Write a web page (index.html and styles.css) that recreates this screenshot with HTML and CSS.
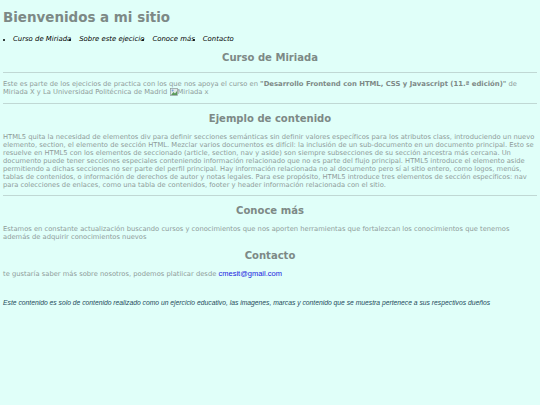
FILE: index.html
```html
<!DOCTYPE html>
<html lang="es">
<head>
<meta charset="utf-8">
<title>Bienvenidos a mi sitio</title>
<link rel="stylesheet" href="styles.css">
</head>
<body>
<header class="top">
<h1>Bienvenidos a mi sitio</h1>
<nav>
<ul class="menu">
<li><a>Curso de Miriada</a></li>
<li><a>Sobre este ejecicio</a></li>
<li><a>Conoce más</a></li>
<li><a>Contacto</a></li>
</ul>
</nav>
</header>
<section class="block intro">
<h2>Curso de Miriada</h2>
<hr>
<p>Este es parte de los ejecicios de practica con los que nos apoya el curso en <strong>"Desarrollo Frontend con HTML, CSS y Javascript (11.ª edición)"</strong> de Miriada X y La Universidad Politécnica de Madrid <span class="broken"><svg class="broken-icon" viewBox="0 0 8 8" width="8" height="8"><rect x="0.5" y="0.5" width="7" height="7" fill="#dfe8e8" stroke="#8a9a9a" stroke-width="0.7"/><path d="M1 7l2.5-3 1.5 1.5L7 3v4z" fill="#5a9a5a"/><circle cx="2.6" cy="2.6" r="1" fill="#7aa0d8"/></svg>Miriada x</span></p>
<hr>
</section>
<section class="block sample">
<h2>Ejemplo de contenido</h2>
<p>HTML5 quita la necesidad de elementos div para definir secciones semánticas sin definir valores específicos para los atributos class, introduciendo un nuevo elemento, section, el elemento de sección HTML. Mezclar varios documentos es difícil: la inclusión de un sub-documento en un documento principal. Esto se resuelve en HTML5 con los elementos de seccionado (article, section, nav y aside) son siempre subsecciones de su sección ancestra más cercana. Un documento puede tener secciones especiales conteniendo información relacionado que no es parte del flujo principal. HTML5 introduce el elemento aside permitiendo a dichas secciones no ser parte del perfil principal. Hay información relacionada no al documento pero sí al sitio entero, como logos, menús, tablas de contenidos, o información de derechos de autor y notas legales. Para ese propósito, HTML5 introduce tres elementos de sección específicos: nav para colecciones de enlaces, como una tabla de contenidos, footer y header información relacionada con el sitio.</p>
<hr>
</section>
<section class="block more">
<h2>Conoce más</h2>
<p>Estamos en constante actualización buscando cursos y conocimientos que nos aporten herramientas que fortalezcan los conocimientos que tenemos además de adquirir conocimientos nuevos</p>
</section>
<section class="block contact">
<h2>Contacto</h2>
<p>te gustaría saber más sobre nosotros, podemos platiicar desde <a class="mail">cmesit@gmail.com</a></p>
</section>
<footer class="foot">Este contenido es solo de contenido realizado como un ejercicio educativo, las imagenes, marcas y contenido que se muestra pertenece a sus respectivos dueños</footer>
</body>
</html>
```

FILE: styles.css
```css
html, body {
  margin: 0;
  padding: 0;
}
body {
  background: #e0fff9;
  color: #8f9c9a;
  font-family: "DejaVu Sans", Verdana, sans-serif;
  font-size: 6.75px;
  line-height: 8px;
  padding: 0 3px;
  height: 405px;
  box-sizing: border-box;
  overflow: hidden;
}
h1 {
  margin: 0;
  padding-top: 10px;
  font-size: 13.44px;
  line-height: 16px;
  color: #7d8986;
  font-weight: bold;
}
.menu {
  margin: 9px 0 0;
  padding: 0 0 0 10px;
  display: flex;
  gap: 8px;
  list-style: disc;
  color: #000;
  font-style: italic;
  font-size: 6.9px;
  line-height: 8px;
}
.menu li::marker {
  font-size: 5px;
}
h2 {
  margin: 0;
  text-align: center;
  font-size: 10.05px;
  line-height: 13px;
  color: #7d8986;
  font-weight: bold;
}
hr {
  margin: 0;
  border: 0;
  border-top: 1px solid #c0d8d4;
  height: 0;
}
p {
  margin: 0;
}
strong {
  color: #7d8986;
  font-size: 6.85px;
}
.broken-icon {
  vertical-align: top;
}
.intro {
  margin-top: 8px;
}
.intro hr:first-of-type {
  margin-top: 8px;
}
.intro p {
  margin: 7px 0;
}
.sample {
  margin-top: 8px;
}
.sample p {
  margin: 8px 0 6px;
}
.more {
  margin-top: 8px;
}
.more p {
  margin: 8px 0 0;
}
.contact {
  margin-top: 8px;
}
.contact p {
  margin: 8px 0 0;
}
.mail {
  color: #1a1ae0;
  font-family: "Liberation Sans", Arial, sans-serif;
  font-size: 7.5px;
}
.foot {
  margin-top: 21px;
  color: #1d4a5a;
  font-family: "Liberation Sans", Arial, sans-serif;
  font-style: italic;
}
```
